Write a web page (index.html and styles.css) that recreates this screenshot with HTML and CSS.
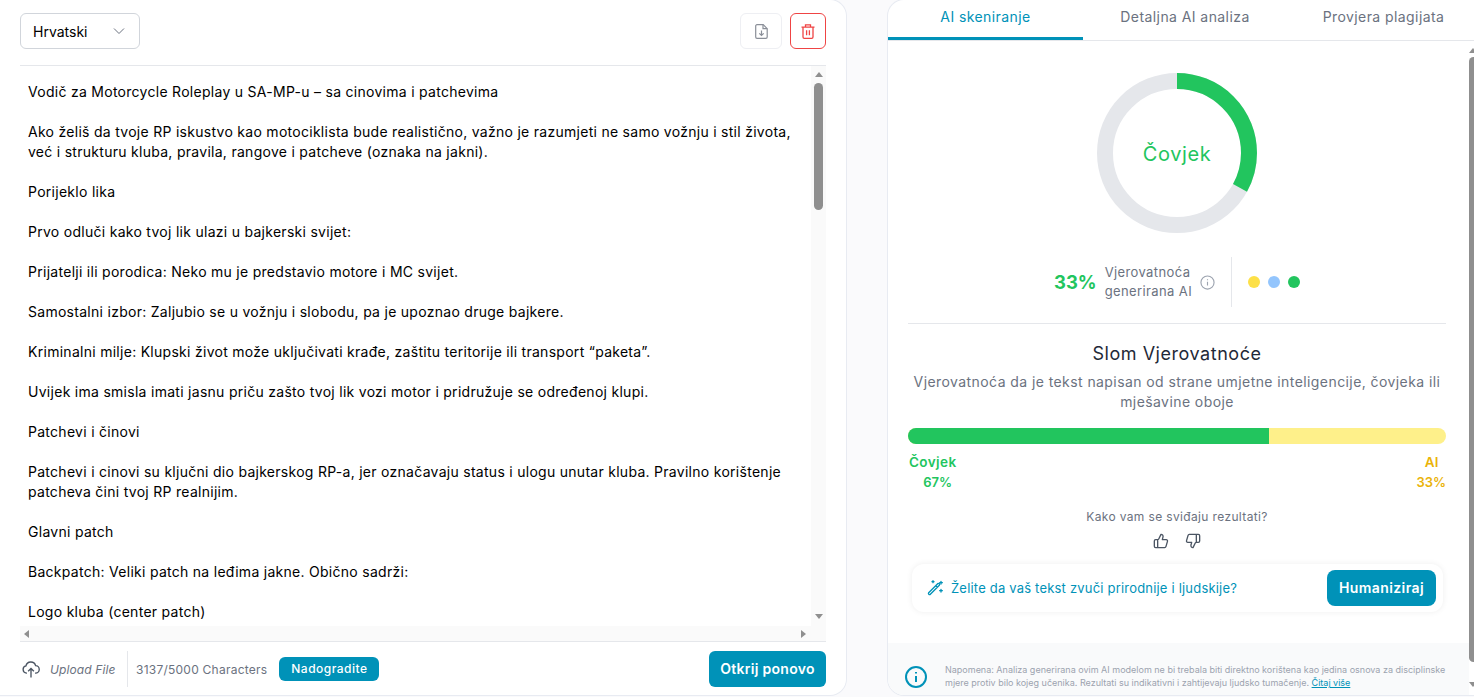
FILE: index.html
```html
<!DOCTYPE html>
<html>
    <head>
        <title>AI skeniranje</title>
        <link rel="stylesheet" href="styles.css">
    </head>
    <body>
        <div id="editor" class="card">
            <div class="editor-top">
                <div class="lang-select">
                    <span>Hrvatski</span>
                    <svg width="12" height="12" viewBox="0 0 12 12" fill="none" stroke="#6b7280" stroke-width="1"><path d="M1 3.500 6 8.500l5-5"/></svg>
                </div>
                <div class="top-actions">
                    <div class="icon-btn">
                        <svg width="13" height="15" viewBox="0 0 13 15" fill="none" stroke="#8a8f98" stroke-width="1.200"><path d="M2 .7h6.200l4 4V13a1.300 1.300 0 0 1-1.300 1.300H2A1.300 1.300 0 0 1 .7 13V2A1.300 1.300 0 0 1 2 .7z"/><path d="M8 .7v4h4.200M6.500 6.500v5M4.300 9.300l2.200 2.200 2.200-2.200"/></svg>
                    </div>
                    <div class="icon-btn icon-btn-red">
                        <svg width="14" height="15" viewBox="0 0 14 15" fill="none" stroke="#ef4444" stroke-width="1.300"><path d="M.5 3.200h13M4.500 3.200V.8h5v2.400M2 3.200V13a1.300 1.300 0 0 0 1.300 1.300h7.400A1.300 1.300 0 0 0 12 13V3.200M5.600 6.300v5M8.400 6.300v5"/></svg>
                    </div>
                </div>
            </div>

            <div class="text-area">
                <div class="text-content">
                    <p>Vodič za Motorcycle Roleplay u SA-MP-u – sa cinovima i patchevima</p>
                    <p>Ako želiš da tvoje RP iskustvo kao motociklista bude realistično, važno je razumjeti ne samo vožnju i stil života, već i strukturu kluba, pravila, rangove i patcheve (oznaka na jakni).</p>
                    <p>Porijeklo lika</p>
                    <p>Prvo odluči kako tvoj lik ulazi u bajkerski svijet:</p>
                    <p>Prijatelji ili porodica: Neko mu je predstavio motore i MC svijet.</p>
                    <p>Samostalni izbor: Zaljubio se u vožnju i slobodu, pa je upoznao druge bajkere.</p>
                    <p>Kriminalni milje: Klupski život može uključivati krađe, zaštitu teritorije ili transport “paketa”.</p>
                    <p>Uvijek ima smisla imati jasnu priču zašto tvoj lik vozi motor i pridružuje se određenoj klupi.</p>
                    <p>Patchevi i činovi</p>
                    <p>Patchevi i cinovi su ključni dio bajkerskog RP-a, jer označavaju status i ulogu unutar kluba. Pravilno korištenje patcheva čini tvoj RP realnijim.</p>
                    <p>Glavni patch</p>
                    <p>Backpatch: Veliki patch na leđima jakne. Obično sadrži:</p>
                    <p>Logo kluba (center patch)</p>
                </div>
                <div class="v-scroll">
                    <span class="arrow-up"></span>
                    <span class="v-thumb"></span>
                    <span class="arrow-down"></span>
                </div>
                <div class="h-scroll">
                    <span class="arrow-left"></span>
                    <span class="arrow-right"></span>
                </div>
            </div>

            <div class="editor-bottom">
                <div class="upload">
                    <svg width="18" height="18" viewBox="0 0 20 20" fill="none" stroke="#4b5563" stroke-width="1.500"><path d="M5.500 14.500H5a4 4 0 0 1-.6-7.900 5.500 5.500 0 0 1 10.700-.3A4 4 0 0 1 15 14.500h-.5"/><path d="M10 19.500v-10M6.800 12.500 10 9.500l3.200 3"/></svg>
                    <em>Upload File</em>
                </div>
                <span class="count">3137/5000 Characters</span>
                <a class="upgrade">Nadogradite</a>
                <a class="detect">Otkrij ponovo</a>
            </div>
        </div>

        <div id="results" class="card">
            <div class="tabs">
                <div class="tab tab-scan">AI skeniranje</div>
                <div class="tab tab-detail">Detaljna AI analiza</div>
                <div class="tab tab-plagiarism">Provjera plagijata</div>
            </div>

            <div class="results-main">
                <div class="results-scroll">
                    <div class="results-body">
                        <div class="donut">
                            <svg width="160" height="160" viewBox="0 0 160 160" fill="none" stroke-width="16">
                                <circle cx="80" cy="80" r="72" stroke="#e5e7eb"/>
                                <circle cx="80" cy="80" r="72" stroke="#22c55e" stroke-dasharray="149.300 452.400" transform="rotate(-90 80 80)"/>
                            </svg>
                            <span class="donut-label">Čovjek</span>
                        </div>

                        <div class="score-row">
                            <span class="score">33%</span>
                            <span class="score-text">Vjerovatnoća<br>generirana AI</span>
                            <svg width="15" height="15" viewBox="0 0 16 16" fill="none" stroke="#9ca3af" stroke-width="1.200"><circle cx="8" cy="8" r="7"/><path d="M8 7.200v4M8 4.500v1.200"/></svg>
                            <span class="score-divider"></span>
                            <span class="dot dot-yellow"></span>
                            <span class="dot dot-blue"></span>
                            <span class="dot dot-green"></span>
                        </div>

                        <div class="breakdown">
                            <h3>Slom Vjerovatnoće</h3>
                            <p>Vjerovatnoća da je tekst napisan od strane umjetne inteligencije, čovjeka ili mješavine oboje</p>
                            <div class="bar"><div class="bar-human" style="width: 67.100%"></div></div>
                            <div class="bar-labels">
                                <div class="human-label"><b>Čovjek</b><b class="pct">67%</b></div>
                                <div class="ai-label"><b>AI</b><b class="pct">33%</b></div>
                            </div>
                        </div>

                        <div class="feedback">
                            <span>Kako vam se sviđaju rezultati?</span>
                            <div class="thumbs">
                                <svg width="16" height="16" viewBox="0 0 24 24" fill="none" stroke="#4b5563" stroke-width="2" stroke-linejoin="round"><path d="M7 10v12M15 5.900 14 10h5.800a2 2 0 0 1 1.900 2.500l-2.300 8a2 2 0 0 1-1.900 1.500H4a2 2 0 0 1-2-2v-8a2 2 0 0 1 2-2h2.800a2 2 0 0 0 1.800-1.100L12 2a3 3 0 0 1 3 3.900z"/></svg>
                                <svg width="16" height="16" viewBox="0 0 24 24" fill="none" stroke="#4b5563" stroke-width="2" stroke-linejoin="round"><path d="M17 14V2M9 18.100 10 14H4.200a2 2 0 0 1-1.900-2.500l2.300-8A2 2 0 0 1 6.500 2H20a2 2 0 0 1 2 2v8a2 2 0 0 1-2 2h-2.800a2 2 0 0 0-1.800 1.100L12 22a3 3 0 0 1-3-3.900z"/></svg>
                            </div>
                        </div>

                        <div class="humanize">
                            <svg width="16" height="16" viewBox="0 0 24 24" fill="none" stroke="#0092b8" stroke-width="2" stroke-linecap="round" stroke-linejoin="round"><path d="M2.500 19 16 5.500a1.800 1.800 0 0 1 2.500 2.500L5 21.500a1.800 1.800 0 0 1-2.500-2.500zM13 8.500l2.500 2.500M21 2v4M19 4h4M21 14v4M19 16h4M9 1v3M7.500 2.500h3"/></svg>
                            <span>Želite da vaš tekst zvuči prirodnije i ljudskije?</span>
                            <a class="humanize-btn">Humaniziraj</a>
                        </div>
                    </div>

                    <div class="note">
                        <svg width="24" height="24" viewBox="0 0 24 24" fill="none" stroke="#0092b8" stroke-width="2"><circle cx="12" cy="12" r="10"/><path d="M12 11v6M12 7v1.500"/></svg>
                        <p>Napomena: Analiza generirana ovim AI modelom ne bi trebala biti direktno korištena kao jedina osnova za disciplinske mjere protiv bilo kojeg učenika. Rezultati su indikativni i zahtijevaju ljudsko tumačenje. <a>Čitaj više</a></p>
                    </div>
                </div>

                <div class="page-scroll">
                    <span class="arrow-up"></span>
                    <span class="page-thumb"></span>
                    <span class="arrow-down"></span>
                </div>
            </div>
        </div>
    </body>
</html>
```

FILE: styles.css
```css
html, body {
    height: 100%;
}

body {
    margin: 0;
    background-color: #fafafc;
    color: #000;
    font-family: 'Inter', 'Noto Sans', sans-serif;
    font-size: 14px;
    display: flex;
    overflow: hidden;
}

body * {
    letter-spacing: 0.03em;
}

p, h3 {
    margin: 0;
}

.card {
    height: 695px;
    background: #fff;
    box-shadow: 0 0 0 1px #e8ebf2;
    box-sizing: border-box;
    display: flex;
    flex-direction: column;
    flex-shrink: 0;
}

#editor {
    width: 846px;
    border-radius: 0 16px 16px 0;
    padding: 0 20px;
}

.editor-top {
    height: 66px;
    box-sizing: border-box;
    flex-shrink: 0;
    border-bottom: 1px solid #e5e7eb;
    padding-bottom: 3px;
    display: flex;
    align-items: center;
    justify-content: space-between;
}

.lang-select {
    width: 120px;
    height: 36px;
    box-sizing: border-box;
    border: 1px solid #d1d5db;
    border-radius: 6px;
    padding: 0 14px 0 12px;
    display: flex;
    align-items: center;
    justify-content: space-between;
}

.lang-select span {
    letter-spacing: 0;
}

.top-actions {
    display: flex;
    gap: 8px;
}

.icon-btn {
    width: 42px;
    height: 36px;
    box-sizing: border-box;
    border: 1px solid #eeeff3;
    border-radius: 6px;
    display: flex;
    align-items: center;
    justify-content: center;
}

.icon-btn-red {
    width: 36px;
    border-color: #ef4444;
}

.text-area {
    flex: 1;
    min-height: 0;
    display: grid;
    grid-template-columns: 1fr 15px;
    grid-template-rows: 1fr 15px;
}

.text-content {
    grid-column: 1;
    grid-row: 1;
    overflow: hidden;
    padding: 16px 8px 0;
    line-height: 20px;
    min-width: 0;
}

.text-content p {
    margin-bottom: 20px;
    letter-spacing: 0.02em;
}

.v-scroll {
    grid-column: 2;
    grid-row: 1 / 3;
    background: #fafafa;
    display: flex;
    flex-direction: column;
    align-items: center;
    padding: 6px 0 22px;
}

.v-thumb {
    width: 9px;
    height: 127px;
    margin: 6px 0 auto;
    background: #8f8f8f;
    border-radius: 5px;
}

.arrow-up, .arrow-down, .arrow-left, .arrow-right {
    width: 0;
    height: 0;
    border: 4.500px solid transparent;
    flex-shrink: 0;
}

.arrow-up {
    border-top: 0;
    border-bottom: 5px solid #8f8f8f;
}

.arrow-down {
    border-bottom: 0;
    border-top: 5px solid #8f8f8f;
}

.arrow-left {
    border-left: 0;
    border-right: 5px solid #8f8f8f;
}

.arrow-right {
    border-right: 0;
    border-left: 5px solid #8f8f8f;
}

.h-scroll {
    grid-column: 1;
    grid-row: 2;
    background: #fafafa;
    display: flex;
    align-items: center;
    justify-content: space-between;
    padding: 0 5px 0 4px;
}

.editor-bottom {
    height: 54px;
    box-sizing: border-box;
    flex-shrink: 0;
    border-top: 1px solid #e5e7eb;
    padding-top: 1px;
    display: flex;
    align-items: center;
}

.upload {
    height: 36px;
    width: 108px;
    box-sizing: border-box;
    flex-shrink: 0;
    padding-left: 2px;
    border-right: 1px solid #e5e7eb;
    display: flex;
    align-items: center;
    gap: 10px;
    font-size: 12px;
    color: #6b7280;
}

.upload em {
    letter-spacing: 0.01em;
}

.count {
    margin-left: 8px;
    font-size: 12px;
    letter-spacing: 0.02em;
    color: #6b7280;
}

.upgrade {
    margin-left: 12px;
    width: 100px;
    height: 24px;
    background: #0092b8;
    color: #fff;
    font-size: 12px;
    font-weight: 500;
    letter-spacing: 0.04em;
    text-align: center;
    line-height: 24px;
    border-radius: 6px;
}

.detect {
    margin-left: auto;
    width: 117px;
    height: 36px;
    background: #0092b8;
    color: #fff;
    font-weight: 600;
    letter-spacing: 0.02em;
    text-align: center;
    line-height: 36px;
    border-radius: 6px;
}

#results {
    width: 586px;
    margin-left: 42px;
    border-radius: 16px 0 0 16px;
}

.tabs {
    display: flex;
    height: 41px;
    flex-shrink: 0;
    border-bottom: 1px solid #e5e7eb;
    box-sizing: border-box;
}

.tab {
    height: 40px;
    box-sizing: border-box;
    flex-shrink: 0;
    text-align: center;
    line-height: 34px;
    color: #6b7280;
}

.tab-scan {
    width: 195px;
    color: #0092b8;
    border-bottom: 3px solid #0092b8;
}

.tab-detail {
    width: 204px;
}

.tab-plagiarism {
    width: 181px;
    margin-left: 6px;
}

.results-main {
    flex: 1;
    min-height: 0;
    display: flex;
}

.results-scroll {
    flex: 1;
    min-width: 0;
    display: flex;
    flex-direction: column;
}

.results-body {
    flex: 1;
    min-height: 0;
    padding: 0 23px 0 20px;
    display: flex;
    flex-direction: column;
    align-items: center;
}

.page-scroll {
    width: 5px;
    flex-shrink: 0;
    overflow: hidden;
    display: flex;
    flex-direction: column;
    padding: 7px 0 0;
    box-sizing: border-box;
}

.page-thumb {
    width: 9px;
    height: 605px;
    flex-shrink: 0;
    margin: 4px 0 auto;
    background: #8f8f8f;
    border-radius: 5px;
}

.page-scroll .arrow-down {
    margin-bottom: 8px;
}

.donut {
    position: relative;
    margin-top: 32px;
    height: 160px;
}

.donut-label {
    position: absolute;
    inset: 0;
    padding-top: 2px;
    display: flex;
    align-items: center;
    justify-content: center;
    color: #22c55e;
    font-size: 20px;
}

.score-row {
    margin-top: 24px;
    height: 50px;
    display: flex;
    align-items: center;
}

.score {
    color: #22c55e;
    font-size: 18.500px;
    font-weight: 700;
    letter-spacing: 0;
}

.score-text {
    margin: 0 8px;
    font-size: 13px;
    line-height: 19px;
    color: #6b7280;
}

.score-divider {
    width: 1px;
    height: 50px;
    background: #e5e7eb;
    margin: 0 16px;
}

.dot {
    width: 12px;
    height: 12px;
    border-radius: 50%;
    margin-right: 8px;
}

.dot-yellow {
    background: #fde047;
}

.dot-blue {
    background: #93c5fd;
}

.dot-green {
    background: #22c55e;
    margin-right: 0;
}

.breakdown {
    align-self: stretch;
    margin-top: 16px;
    border-top: 1px solid #e5e7eb;
    text-align: center;
    padding-top: 18px;
}

.breakdown h3 {
    font-size: 18px;
    font-weight: 400;
    color: #1f2937;
    line-height: 24px;
}

.breakdown p {
    margin-top: 6px;
    color: #6b7280;
    line-height: 20px;
}

.bar {
    margin-top: 16px;
    height: 16px;
    border-radius: 8px;
    overflow: hidden;
    background: #fef08a;
}

.bar-human {
    height: 100%;
    background: #22c55e;
}

.bar-labels {
    margin-top: 8px;
    display: flex;
    justify-content: space-between;
    font-size: 13.500px;
    line-height: 20px;
}

.bar-labels b {
    display: block;
    font-weight: 600;
}

.bar-labels .pct {
    font-size: 13px;
    letter-spacing: 0;
}

.human-label {
    color: #22c55e;
    padding-left: 1px;
}

.human-label .pct {
    margin-left: 10px;
}

.ai-label {
    color: #eab308;
    text-align: right;
}

.ai-label b:first-child {
    margin-right: 7px;
}

.feedback {
    margin-top: 17px;
    display: flex;
    flex-direction: column;
    align-items: center;
    font-size: 12px;
    line-height: 16px;
    color: #6b7280;
}

.thumbs {
    margin-top: 8px;
    display: flex;
    gap: 16px;
}

.humanize {
    align-self: stretch;
    margin: 15px 3px 0 4px;
    height: 48px;
    padding: 0 7px 0 15px;
    border-radius: 12px;
    box-shadow: 0 0 6px rgba(0, 0, 0, 0.07);
    display: flex;
    align-items: center;
    gap: 8px;
    color: #0092b8;
    font-size: 13px;
}

.humanize span {
    letter-spacing: 0.015em;
}

.humanize-btn {
    margin-left: auto;
    background: #0092b8;
    color: #fff;
    font-size: 14px;
    font-weight: 600;
    height: 36px;
    width: 109px;
    text-align: center;
    line-height: 36px;
    border-radius: 8px;
}

.note {
    background: #f9fafb;
    height: 52px;
    box-sizing: border-box;
    flex-shrink: 0;
    padding: 0 20px 6px 16px;
    display: flex;
    align-items: flex-end;
    gap: 17px;
    border-radius: 0 0 0 16px;
}

.note svg {
    flex-shrink: 0;
}

.note p, .note a {
    letter-spacing: 0;
}

.note p {
    font-size: 9px;
    line-height: 13px;
    color: #9ca3af;
}

.note a {
    color: #0092b8;
    text-decoration: underline;
}
```
